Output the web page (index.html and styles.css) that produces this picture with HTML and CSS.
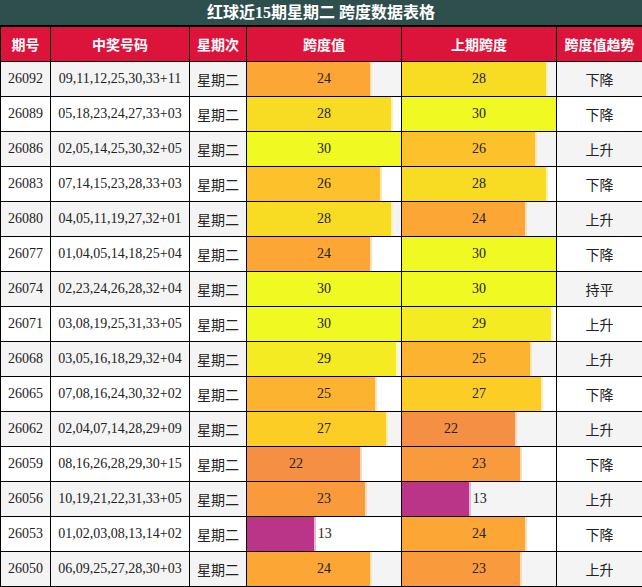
FILE: index.html
```html
<!DOCTYPE html>
<html lang="zh">
<head>
<meta charset="utf-8">
<title>红球近15期星期二 跨度数据表格</title>
<link rel="stylesheet" href="styles.css">
</head>
<body>
<div class="title">红球近15期星期二 跨度数据表格</div>
<table class="grid">
  <colgroup>
    <col class="c1"><col class="c2"><col class="c3"><col class="c4"><col class="c5"><col class="c6">
  </colgroup>
  <thead>
    <tr><th>期号</th><th>中奖号码</th><th>星期次</th><th>跨度值</th><th>上期跨度</th><th>跨度值趋势</th></tr>
  </thead>
  <tbody>
    <tr><td>26092</td><td>09,11,12,25,30,33+11</td><td class="cjk">星期二</td>
      <td class="bc"><div class="wrap"><div class="bar" style="--w:80%;--c:#fca636"></div><span class="lbl">24</span></div></td>
      <td class="bc"><div class="wrap"><div class="bar" style="--w:93.333%;--c:#f8dc24"></div><span class="lbl">28</span></div></td>
      <td class="cjk">下降</td></tr>
    <tr><td>26089</td><td>05,18,23,24,27,33+03</td><td class="cjk">星期二</td>
      <td class="bc"><div class="wrap"><div class="bar" style="--w:93.333%;--c:#f8dc24"></div><span class="lbl">28</span></div></td>
      <td class="bc"><div class="wrap"><div class="bar" style="--w:100%;--c:#f0f921"></div><span class="lbl">30</span></div></td>
      <td class="cjk">下降</td></tr>
    <tr><td>26086</td><td>02,05,14,25,30,32+05</td><td class="cjk">星期二</td>
      <td class="bc"><div class="wrap"><div class="bar" style="--w:100%;--c:#f0f921"></div><span class="lbl">30</span></div></td>
      <td class="bc"><div class="wrap"><div class="bar" style="--w:86.667%;--c:#fcc12b"></div><span class="lbl">26</span></div></td>
      <td class="cjk">上升</td></tr>
    <tr><td>26083</td><td>07,14,15,23,28,33+03</td><td class="cjk">星期二</td>
      <td class="bc"><div class="wrap"><div class="bar" style="--w:86.667%;--c:#fcc12b"></div><span class="lbl">26</span></div></td>
      <td class="bc"><div class="wrap"><div class="bar" style="--w:93.333%;--c:#f8dc24"></div><span class="lbl">28</span></div></td>
      <td class="cjk">下降</td></tr>
    <tr><td>26080</td><td>04,05,11,19,27,32+01</td><td class="cjk">星期二</td>
      <td class="bc"><div class="wrap"><div class="bar" style="--w:93.333%;--c:#f8dc24"></div><span class="lbl">28</span></div></td>
      <td class="bc"><div class="wrap"><div class="bar" style="--w:80%;--c:#fca636"></div><span class="lbl">24</span></div></td>
      <td class="cjk">上升</td></tr>
    <tr><td>26077</td><td>01,04,05,14,18,25+04</td><td class="cjk">星期二</td>
      <td class="bc"><div class="wrap"><div class="bar" style="--w:80%;--c:#fca636"></div><span class="lbl">24</span></div></td>
      <td class="bc"><div class="wrap"><div class="bar" style="--w:100%;--c:#f0f921"></div><span class="lbl">30</span></div></td>
      <td class="cjk">下降</td></tr>
    <tr><td>26074</td><td>02,23,24,26,28,32+04</td><td class="cjk">星期二</td>
      <td class="bc"><div class="wrap"><div class="bar" style="--w:100%;--c:#f0f921"></div><span class="lbl">30</span></div></td>
      <td class="bc"><div class="wrap"><div class="bar" style="--w:100%;--c:#f0f921"></div><span class="lbl">30</span></div></td>
      <td class="cjk">持平</td></tr>
    <tr><td>26071</td><td>03,08,19,25,31,33+05</td><td class="cjk">星期二</td>
      <td class="bc"><div class="wrap"><div class="bar" style="--w:100%;--c:#f0f921"></div><span class="lbl">30</span></div></td>
      <td class="bc"><div class="wrap"><div class="bar" style="--w:96.667%;--c:#f4eb22"></div><span class="lbl">29</span></div></td>
      <td class="cjk">上升</td></tr>
    <tr><td>26068</td><td>03,05,16,18,29,32+04</td><td class="cjk">星期二</td>
      <td class="bc"><div class="wrap"><div class="bar" style="--w:96.667%;--c:#f4eb22"></div><span class="lbl">29</span></div></td>
      <td class="bc"><div class="wrap"><div class="bar" style="--w:83.333%;--c:#fcb330"></div><span class="lbl">25</span></div></td>
      <td class="cjk">上升</td></tr>
    <tr><td>26065</td><td>07,08,16,24,30,32+02</td><td class="cjk">星期二</td>
      <td class="bc"><div class="wrap"><div class="bar" style="--w:83.333%;--c:#fcb330"></div><span class="lbl">25</span></div></td>
      <td class="bc"><div class="wrap"><div class="bar" style="--w:90%;--c:#fcce25"></div><span class="lbl">27</span></div></td>
      <td class="cjk">下降</td></tr>
    <tr><td>26062</td><td>02,04,07,14,28,29+09</td><td class="cjk">星期二</td>
      <td class="bc"><div class="wrap"><div class="bar" style="--w:90%;--c:#fcce25"></div><span class="lbl">27</span></div></td>
      <td class="bc"><div class="wrap"><div class="bar" style="--w:73.333%;--c:#f58f44"></div><span class="lbl lbl-short">22</span></div></td>
      <td class="cjk">上升</td></tr>
    <tr><td>26059</td><td>08,16,26,28,29,30+15</td><td class="cjk">星期二</td>
      <td class="bc"><div class="wrap"><div class="bar" style="--w:73.333%;--c:#f58f44"></div><span class="lbl lbl-short">22</span></div></td>
      <td class="bc"><div class="wrap"><div class="bar" style="--w:76.667%;--c:#f99b3d"></div><span class="lbl">23</span></div></td>
      <td class="cjk">下降</td></tr>
    <tr><td>26056</td><td>10,19,21,22,31,33+05</td><td class="cjk">星期二</td>
      <td class="bc"><div class="wrap"><div class="bar" style="--w:76.667%;--c:#f99b3d"></div><span class="lbl">23</span></div></td>
      <td class="bc"><div class="wrap"><div class="bar" style="--w:43.333%;--c:#ba3488"></div><span class="out">13</span></div></td>
      <td class="cjk">上升</td></tr>
    <tr><td>26053</td><td>01,02,03,08,13,14+02</td><td class="cjk">星期二</td>
      <td class="bc"><div class="wrap"><div class="bar" style="--w:43.333%;--c:#ba3488"></div><span class="out">13</span></div></td>
      <td class="bc"><div class="wrap"><div class="bar" style="--w:80%;--c:#fca636"></div><span class="lbl">24</span></div></td>
      <td class="cjk">下降</td></tr>
    <tr><td>26050</td><td>06,09,25,27,28,30+03</td><td class="cjk">星期二</td>
      <td class="bc"><div class="wrap"><div class="bar" style="--w:80%;--c:#fca636"></div><span class="lbl">24</span></div></td>
      <td class="bc"><div class="wrap"><div class="bar" style="--w:76.667%;--c:#f99b3d"></div><span class="lbl">23</span></div></td>
      <td class="cjk">上升</td></tr>
  </tbody>
</table>
</body>
</html>
```
FILE: styles.css
```css
html, body {
  margin: 0;
  padding: 0;
  background: #ffffff;
}
body {
  width: 642px;
  font-family: "Liberation Serif", "Noto Sans CJK SC", serif;
  color: #222;
}
.title {
  height: 26px;
  box-sizing: border-box;
  background: #2f4f4f;
  color: #ffffff;
  font-weight: bold;
  font-size: 16px;
  line-height: 25px;
  text-align: center;
  border-bottom: 1px solid #000;
}
.grid {
  width: 642px;
  border-collapse: collapse;
  table-layout: fixed;
  font-size: 14px;
}
.c1 { width: 50px; }
.c2 { width: 139px; }
.c3 { width: 57px; }
.c4 { width: 155px; }
.c5 { width: 155px; }
.c6 { width: 86px; }
.grid th, .grid td {
  border: 1px solid #000;
  padding: 0;
  height: 34px;
  text-align: center;
  vertical-align: middle;
}
.grid th {
  background: #dc143c;
  color: #ffffff;
  font-family: "Noto Sans CJK SC", sans-serif;
  font-weight: bold;
  font-size: 14px;
}
.grid tbody tr:nth-child(odd) td { background: #f4f4f4; }
.grid tbody tr:nth-child(even) td { background: #ffffff; }
.grid td.cjk {
  font-family: "Noto Sans CJK SC", sans-serif;
  font-size: 14px;
  color: #222;
}
.wrap {
  position: relative;
  display: flex;
  height: 34px;
  overflow: hidden;
}
.bar {
  width: var(--w);
  background: var(--c);
  box-shadow: 2px 0 0 color-mix(in srgb, var(--c) 35%, #ffffff);
  flex: none;
}
.lbl {
  position: absolute;
  top: 0;
  bottom: 0;
  left: 50%;
  transform: translateX(-50%);
  display: flex;
  align-items: center;
}
.lbl-short {
  left: 49px;
}
.out {
  display: flex;
  align-items: center;
  padding-left: 4px;
}
```
